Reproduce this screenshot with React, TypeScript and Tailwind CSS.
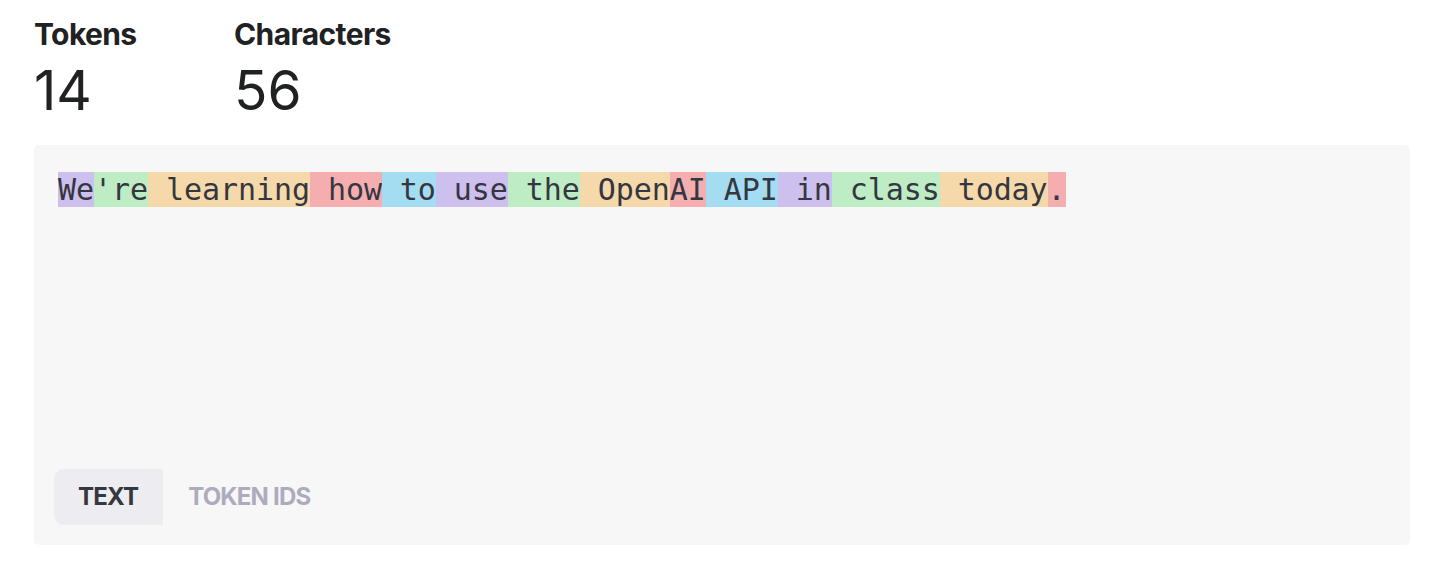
const tokens: { t: string; c: string }[] = [
  { t: "We", c: "bg-[#cdc0ee]" },
  { t: "'re", c: "bg-[#beedc5]" },
  { t: " learning", c: "bg-[#f6d9aa]" },
  { t: " how", c: "bg-[#f4aeb0]" },
  { t: " to", c: "bg-[#a4dcf2]" },
  { t: " use", c: "bg-[#cdc0ee]" },
  { t: " the", c: "bg-[#beedc5]" },
  { t: " Open", c: "bg-[#f6d9aa]" },
  { t: "AI", c: "bg-[#f4aeb0]" },
  { t: " API", c: "bg-[#a4dcf2]" },
  { t: " in", c: "bg-[#cdc0ee]" },
  { t: " class", c: "bg-[#beedc5]" },
  { t: " today", c: "bg-[#f6d9aa]" },
  { t: ".", c: "bg-[#f4aeb0]" },
];

function Stat({ label, value }: { label: string; value: string }) {
  return (
    <div className="flex flex-col w-[200px]">
      <span className="text-[30px] leading-[36px] font-bold tracking-[-0.6px] text-[#202123]">{label}</span>
      <span className="mt-[8px] text-[55px] leading-[60px] font-normal text-[#202123]">{value}</span>
    </div>
  );
}

export default function App() {
  return (
    <div className="w-[1439px] h-[563px] bg-white px-[34px] pt-[16px] font-['Inter',sans-serif]">
      <div className="flex">
        <Stat label="Tokens" value="14" />
        <Stat label="Characters" value="56" />
      </div>
      <div className="mt-[25px] w-[1376px] h-[400px] bg-[#f7f7f7] rounded-[5px] flex flex-col justify-between px-[20px] pt-[27px] pb-[20px]">
        <div className="px-[4px] font-['DejaVu_Sans_Mono',monospace] text-[30px] leading-[36px] tracking-[-0.07px] text-[#353740] whitespace-pre">
          {tokens.map((k, i) => (
            <span key={i} className={k.c}>
              {k.t}
            </span>
          ))}
        </div>
        <div className="flex items-stretch h-[56px] text-[24px] font-bold tracking-[-0.8px]">
          <div className="flex items-center pl-[24px] pr-[25px] bg-[#ececf1] rounded-l-[10px] text-[#353740]">
            TEXT
          </div>
          <div className="flex items-center px-[25px] text-[#acacbe]">
            TOKEN IDS
          </div>
        </div>
      </div>
    </div>
  );
}
